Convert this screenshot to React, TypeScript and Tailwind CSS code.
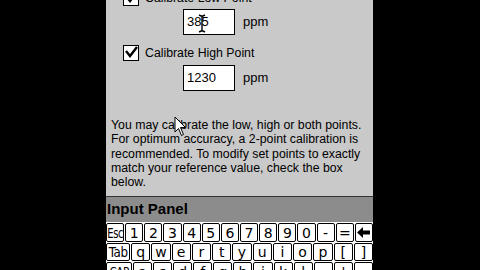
import React from 'react';

const Check: React.FC<{ checked?: boolean }> = ({ checked }) => (
  <div className="w-[16px] h-[16px] shrink-0 bg-white border border-black flex items-center justify-center">
    {checked && (
      <svg width="14" height="14" viewBox="0 0 14 14">
        <path d="M2 5 L6 10 L13 1" fill="none" stroke="black" strokeWidth="2.4" strokeLinejoin="miter" />
      </svg>
    )}
  </div>
);

const Key: React.FC<{ label?: React.ReactNode; className?: string }> = ({ label, className = 'flex-1' }) => (
  <div className={`${className} min-w-0 h-full bg-white border border-black rounded-[2px] flex items-center justify-center text-[14px] leading-none text-black overflow-hidden font-['DejaVu_Sans',sans-serif]`}>
    {label}
  </div>
);

const BackArrow = () => (
  <svg width="13" height="11" viewBox="0 0 13 11">
    <path d="M0 5.5 L6 0 L6 3.5 L13 3.5 L13 7.5 L6 7.5 L6 11 Z" fill="black" />
  </svg>
);

const row1 = ['1', '2', '3', '4', '5', '6', '7', '8', '9', '0', '-', '='];
const row2 = ['q', 'w', 'e', 'r', 't', 'y', 'u', 'i', 'o', 'p', '[', ']'];
const row3 = ['a', 's', 'd', 'f', 'g', 'h', 'j', 'k', 'l', ';', "'", ''];

export default function App() {
  return (
    <div className="relative w-[480px] h-[270px] bg-black overflow-hidden font-['Liberation_Sans',Arial,sans-serif] text-black">
      <div className="ml-[106px] w-[267px] h-full flex flex-col overflow-hidden">
        {/* Calibration form */}
        <div className="h-[196px] shrink-0 bg-[#c9c9c9] overflow-hidden">
          <div className="-mt-[10px] flex flex-col">
            <div className="pl-[17px] h-[16px] flex items-center gap-[6px] text-[12.3px]">
              <Check checked />
              <span>Calibrate Low Point</span>
            </div>
            <div className="mt-[3px] pl-[77px] flex items-center gap-[8px]">
              <div className="w-[52px] h-[26px] bg-white border border-black pl-[3px] flex items-center text-[13px]">385</div>
              <span className="text-[13px]">ppm</span>
            </div>
            <div className="mt-[10px] pl-[17px] h-[16px] flex items-center gap-[6px] text-[12.3px]">
              <Check checked />
              <span>Calibrate High Point</span>
            </div>
            <div className="mt-[4px] pl-[77px] flex items-center gap-[8px]">
              <div className="w-[52px] h-[26px] bg-white border border-black pl-[3px] flex items-center text-[13px]">1230</div>
              <span className="text-[13px]">ppm</span>
            </div>
            <p className="mt-[27px] pl-[5px] text-[12.3px] leading-[14.3px] whitespace-nowrap">
              You may calibrate the low, high or both points.
              <br />
              For optimum accuracy, a 2-point calibration is
              <br />
              recommended. To modify set points to exactly
              <br />
              match your reference value, check the box
              <br />
              below.
            </p>
          </div>
        </div>
        <div className="h-px shrink-0 bg-[#333333]" />
        {/* Input panel title */}
        <div className="h-[25px] shrink-0 bg-[#8c8c8c] flex items-center pl-[1px] text-[15px] font-bold">
          Input Panel
        </div>
        {/* Keyboard */}
        <div className="flex-1 bg-white pt-px flex flex-col gap-px">
          <div className="h-[19px] shrink-0 flex gap-px">
            <Key label={<span className="text-[14px] inline-block scale-x-[0.72] tracking-[-0.5px]">Esc</span>} />
            {row1.map((k) => (
              <Key key={k} label={k} />
            ))}
            <Key label={<BackArrow />} />
          </div>
          <div className="h-[18px] shrink-0 flex gap-px">
            <Key className="w-[24px] shrink-0" label={<span className="text-[14px] inline-block scale-x-[0.85] tracking-[-0.5px]">Tab</span>} />
            {row2.map((k) => (
              <Key key={k} label={k} />
            ))}
          </div>
          <div className="h-[19px] shrink-0 flex gap-px">
            <Key className="w-[26px] shrink-0" label={<span className="text-[13px] inline-block scale-x-[0.8] tracking-[-0.5px]">CAP</span>} />
            {row3.map((k, i) => (
              <Key key={i} label={k} />
            ))}
          </div>
        </div>
      </div>

      {/* I-beam cursor over the low point value */}
      <svg className="absolute left-[198px] top-[14px]" width="8" height="19" viewBox="0 0 8 19">
        <path d="M1 1 L3 2 L5 2 L7 1 M4 2 L4 17 M1 18 L3 17 L5 17 L7 18" fill="none" stroke="black" strokeWidth="1.4" />
      </svg>

      {/* Mouse pointer */}
      <svg className="absolute left-[174px] top-[116px]" width="13" height="21" viewBox="0 0 13 21">
        <path d="M1 1 L1 16 L4.5 12.5 L7.5 19.5 L9.5 18.5 L6.5 11.5 L11.5 11.5 Z" fill="white" stroke="black" strokeWidth="1" strokeLinejoin="round" />
      </svg>
    </div>
  );
}
